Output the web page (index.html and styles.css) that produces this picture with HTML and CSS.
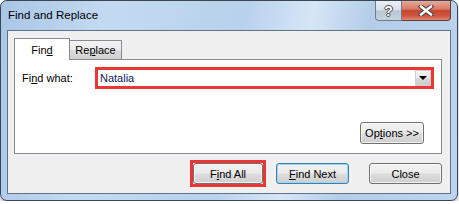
FILE: index.html
```html
<!DOCTYPE html>
<html>
<head>
<meta charset="utf-8">
<title>Find and Replace</title>
<link rel="stylesheet" href="styles.css">
</head>
<body>
<div class="window">
  <div class="titlebar">
    <span class="title">Find and Replace</span>
    <div class="caption">
      <div class="cap help">?</div>
      <div class="cap close">
        <svg width="16" height="11" viewBox="0 0 16 11">
          <path d="M3 1.5 L13 9.5 M13 1.5 L3 9.5" stroke="#4a4a4a" stroke-width="4.6" stroke-linecap="square"/>
          <path d="M3 1.5 L13 9.5 M13 1.5 L3 9.5" stroke="#fff" stroke-width="2.4" stroke-linecap="square"/>
        </svg>
      </div>
    </div>
  </div>

  <div class="client">
    <div class="tabs">
      <div class="tab active">Fin<u>d</u></div>
      <div class="tab">Re<u>p</u>lace</div>
    </div>

    <div class="panel">
      <div class="row">
        <label class="label">Fi<u>n</u>d what:</label>
        <div class="combo marked">
          <span class="value">Natalia</span>
          <div class="drop"><i></i></div>
        </div>
      </div>
      <div class="options-row">
        <button class="btn options">Op<u>t</u>ions &gt;&gt;</button>
      </div>
    </div>

    <div class="actions">
      <span class="marked"><button class="btn find-all">F<u>i</u>nd All</button></span>
      <button class="btn default"><u>F</u>ind Next</button>
      <button class="btn close-btn">Close</button>
    </div>
  </div>
</div>
</body>
</html>
```

FILE: styles.css
```css
/** PAGE **/
html, body {
  margin: 0;
  padding: 0;
  background: #ffffff;
}

body {
  font-family: "Liberation Sans", Arial, sans-serif;
  font-size: 11px;
  color: #000;
}

u { text-decoration: underline; text-underline-offset: 1px; }

/** WINDOW FRAME **/
.window {
  box-sizing: border-box;
  width: 458px;
  height: 201px;
  padding: 0 6px 6px 6px;
  border: 1px solid #3b4654;
  border-radius: 7px;
  background: linear-gradient(100deg, #a9c6e6 0%, #c3daf1 22%, #b8d1ec 50%, #d6e6f6 64%, #b3cde9 76%, #bdd5ee 100%);
  box-shadow: 0 2px 3px rgba(0,0,0,0.35);
}

.titlebar {
  height: 29px;
  display: flex;
  justify-content: space-between;
  align-items: flex-start;
}

.title {
  font-size: 11.5px;
  padding: 8px 0 0 1px;
  color: #000;
}

.caption {
  display: flex;
}

.cap {
  box-sizing: border-box;
  height: 20px;
  display: flex;
  align-items: center;
  justify-content: center;
}

.help {
  width: 27px;
  border: 1px solid #6f7c8c;
  border-top: none;
  border-radius: 0 0 0 4px;
  background: linear-gradient(#eaf0f6 0%, #d8e0e9 45%, #b9c6d3 52%, #c6d2de 100%);
  color: #fff;
  font-weight: bold;
  font-size: 14px;
  text-shadow: -1px 0 #4a4a4a, 1px 0 #4a4a4a, 0 -1px #4a4a4a, 0 1px #4a4a4a;
}

.close {
  width: 49px;
  border: 1px solid #6b3a33;
  border-top: none;
  border-left: none;
  border-radius: 0 0 4px 0;
  background: linear-gradient(#e9a999 0%, #d97a66 42%, #c5432f 52%, #cf5943 80%, #df8c74 100%);
}

/** CLIENT AREA **/
.client {
  box-sizing: border-box;
  height: 164px;
  padding: 7px 8px 0 6px;
  border: 1px solid #627284;
  background: #f0f0f0;
}

.tabs {
  display: flex;
  align-items: flex-end;
  height: 21px;
}

.tab {
  box-sizing: border-box;
  border: 1px solid #898c95;
  border-bottom: none;
  text-align: center;
}

.tab.active {
  position: relative;
  z-index: 1;
  width: 56px;
  height: 22px;
  margin-bottom: -1px;
  padding-top: 5px;
  background: #fff;
}

.tab + .tab {
  width: 53px;
  height: 19px;
  margin-left: -1px;
  padding-top: 3px;
  background: linear-gradient(#f3f3f3 0%, #ebebeb 50%, #dddddd 51%, #d0d0d0 100%);
}

.panel {
  box-sizing: border-box;
  height: 95px;
  padding: 7px 7px 0 7px;
  border: 1px solid #898c95;
  background: #fff;
}

.row {
  display: flex;
  align-items: center;
}

.label {
  width: 73px;
  flex: none;
}

.combo {
  box-sizing: border-box;
  flex: 1;
  height: 22px;
  display: flex;
  align-items: center;
  justify-content: space-between;
  background: #fff;
}

.value {
  padding-left: 2px;
  color: #0c1a5a;
}

.drop {
  box-sizing: border-box;
  width: 16px;
  height: 16px;
  display: flex;
  align-items: center;
  justify-content: center;
  border: 1px solid #cfcfcf;
  background: linear-gradient(#f4f4f4 0%, #e9e9e9 50%, #d9d9d9 51%, #cdcdcd 100%);
}

.drop i {
  width: 0;
  height: 0;
  border-left: 4px solid transparent;
  border-right: 4px solid transparent;
  border-top: 4px solid #000;
}

.options-row {
  display: flex;
  justify-content: flex-end;
  margin-top: 33px;
  padding-right: 10px;
}

/** BUTTONS **/
.btn {
  box-sizing: border-box;
  height: 21px;
  padding: 0;
  font-family: inherit;
  font-size: 11px;
  color: #000;
  border: 1px solid #707070;
  border-radius: 3px;
  background: linear-gradient(#f2f2f2 0%, #ebebeb 48%, #dddddd 52%, #cfcfcf 100%);
  box-shadow: inset 0 0 0 1px rgba(255,255,255,0.7);
}

.options {
  width: 64px;
  height: 22px;
}

.actions {
  display: flex;
  justify-content: flex-end;
  align-items: flex-start;
  margin-top: 6px;
}

.find-all {
  display: block;
  width: 70px;
}

.default {
  width: 73px;
  margin-top: 3px;
  margin-left: 10px;
  border-color: #3c7fb1;
  box-shadow: inset 0 0 0 1px #9ad6f4;
}

.close-btn {
  width: 73px;
  margin-top: 3px;
  margin-left: 20px;
}

/** ANNOTATION BOXES **/
.marked {
  border: 3px solid #ec3535;
}

span.marked {
  display: block;
}
```
